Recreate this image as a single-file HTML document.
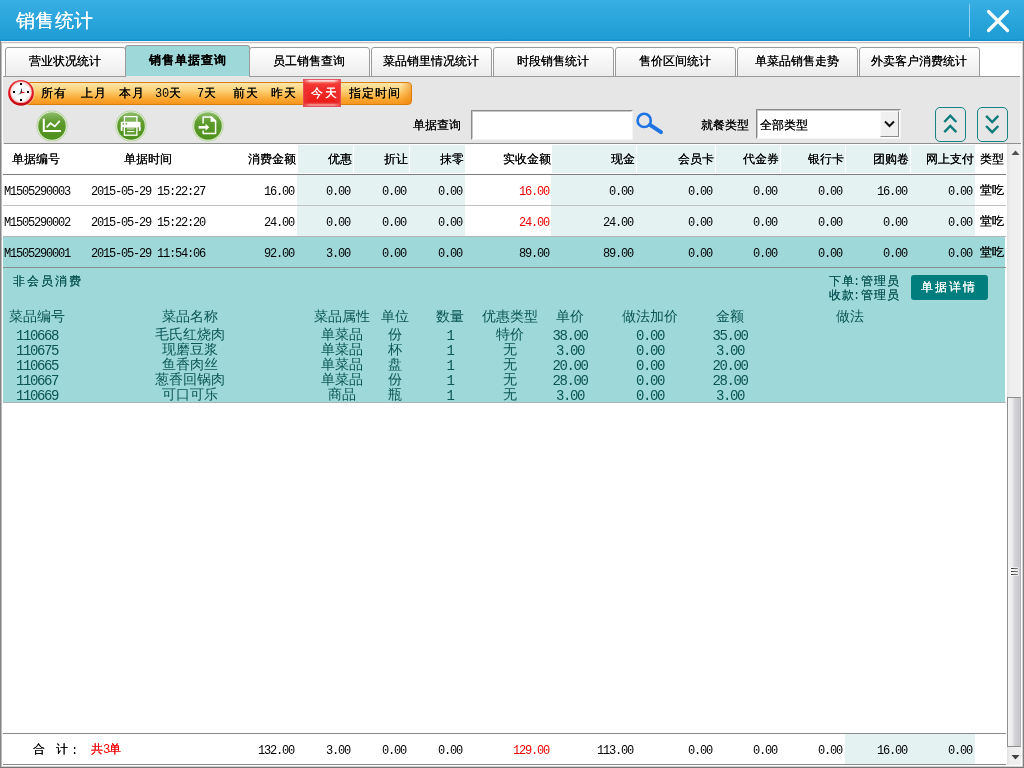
<!DOCTYPE html>
<html><head><meta charset="utf-8"><title>销售统计</title>
<style>
*{box-sizing:border-box;margin:0;padding:0}
html,body{width:1024px;height:768px;overflow:hidden;background:#fff}
body{position:relative;font-family:"Liberation Sans",sans-serif;font-size:12px;color:#000}
.a{position:absolute}
.t{position:absolute;white-space:nowrap;font-size:12px;line-height:14px;height:14px;text-shadow:0 0 0 currentColor}
.m{font-family:"Liberation Mono",monospace;letter-spacing:-1.2px;text-shadow:none}
.red{color:#f00000}
#title{left:0;top:0;width:1024px;height:41px;background:linear-gradient(#38afe4 0,#2ca6dd 18px,#1f9dd5 39px,#1391cd 40px,#1391cd 41px)}
#title .tt{left:16px;top:9px;font-size:19px;letter-spacing:.3px;line-height:24px;height:24px;color:#fff}
.tab{position:absolute;top:47px;height:30px;width:121px;border:1px solid #9a9a9a;border-radius:3px 3px 0 0;background:linear-gradient(#ffffff,#ececec);text-align:center;font-size:12px;line-height:14px;padding-top:6px;padding-right:2px;white-space:nowrap;text-shadow:0 0 0 currentColor}
.tab.sel{top:45px;height:31px;width:125px;background:#9fd8d8;border-bottom:none;font-weight:bold;letter-spacing:1px;padding-top:7px;padding-right:0;z-index:2}
.ls{letter-spacing:1px}
.ls .m{letter-spacing:-.2px}
.hc{position:absolute;top:145px;height:28px;background:#e4f2f2}
.bg{position:absolute;background:#e4f2f2}
.ln{position:absolute;height:1px}
.dt{text-shadow:none;color:#0a5656;font-size:14px;line-height:16px;height:16px}
.dt .m,.dt.m{letter-spacing:-1.4px}
.sp{letter-spacing:2px}
#w{position:absolute;left:0;top:0;width:1024px;height:768px;will-change:transform}
</style></head><body><div id="w">

<div class="a" id="title"><div class="t tt">销售统计</div>
<div class="a" style="left:969px;top:4px;width:1px;height:33px;background:#8fd1f1"></div>
<svg class="a" style="left:984px;top:7px" width="28" height="28" viewBox="0 0 28 28"><path d="M4.5 4.5 L23.5 23.5 M23.5 4.5 L4.5 23.5" stroke="#fff" stroke-width="3.2" stroke-linecap="round" fill="none"/></svg>
</div>
<div class="a" style="left:0;top:41px;width:1px;height:727px;background:#848484"></div>
<div class="a" style="left:1px;top:41px;width:1px;height:726px;background:#bcbcbc"></div>
<div class="a" style="left:1023px;top:41px;width:1px;height:727px;background:#808080"></div>
<div class="a" style="left:1022px;top:41px;width:1px;height:726px;background:#d4d4d4"></div>
<div class="a" style="left:0;top:767px;width:1024px;height:1px;background:#767676"></div>
<div class="a" style="left:1px;top:766px;width:1022px;height:1px;background:#d0d0d0"></div>
<div class="a" style="left:1px;top:41px;width:1022px;height:1px;background:#f4f4f4"></div>
<div class="a" style="left:2px;top:42px;width:1020px;height:1px;background:#c6bebe"></div>
<div class="a" style="left:2px;top:43px;width:1020px;height:1px;background:#f2f0f0"></div>
<div class="a" style="left:3px;top:76px;width:1017px;height:68px;background:#e6e6e6;border-top:1px solid #9a9a9a"></div>
<div class="a" style="left:1020px;top:77px;width:2px;height:66px;background:#f6f6f6"></div>

<div class="tab" style="left:5px">营业状况统计</div>
<div class="tab sel" style="left:125px">销售单据查询</div>
<div class="tab" style="left:249px">员工销售查询</div>
<div class="tab" style="left:371px">菜品销里情况统计</div>
<div class="tab" style="left:493px">时段销售统计</div>
<div class="tab" style="left:615px">售价区间统计</div>
<div class="tab" style="left:737px">单菜品销售走势</div>
<div class="tab" style="left:859px">外卖客户消费统计</div>
<div class="a" style="left:126px;top:76px;width:123px;height:1px;background:#e6e6e6;z-index:3"></div>
<div class="a" style="left:18px;top:82px;width:394px;height:23px;border:1px solid #dc7d08;border-radius:4px;background:linear-gradient(#fde7ab 0%,#fcd278 35%,#f9a832 75%,#f7941c 100%)"></div>
<div class="a" style="left:401px;top:83px;width:10px;height:21px;border-radius:0 3px 3px 0;background:linear-gradient(90deg,rgba(240,130,10,0),rgba(236,128,10,.55))"></div>
<div class="a" style="left:303px;top:79px;width:38px;height:28px;background:linear-gradient(#e05860 0,#f8b8b8 1px,#fff0f0 2px,#f88078 3px,#f43a34 5px,#f22c2a 10px,#ee2420 17px,#ea1c1a 23px,#ee4844 24.5px,#f6a4a4 26px,#ec6468 27px,#d84c56 28px)"></div>
<div class="a" style="left:303px;top:79px;width:38px;height:28px;background:linear-gradient(90deg,rgba(236,50,52,.95) 0,rgba(238,40,40,0) 7px,rgba(238,40,40,0) 31px,rgba(236,50,52,.95) 38px)"></div>
<div class="a" style="left:303px;top:79px;width:38px;height:28px;border:1px solid rgba(226,84,98,.85)"></div>
<svg class="a" style="left:6px;top:78px" width="30" height="30" viewBox="0 0 30 30">
<defs><radialGradient id="cg" cx="50%" cy="50%" r="50%"><stop offset="0" stop-color="#ffffff"/><stop offset=".74" stop-color="#ffffff"/><stop offset=".9" stop-color="#fbdcdc"/><stop offset="1" stop-color="#f09c9c"/></radialGradient>
<linearGradient id="cr" x1="0" y1="0" x2="0" y2="1"><stop offset="0" stop-color="#e62a30"/><stop offset=".6" stop-color="#e0141c"/><stop offset="1" stop-color="#c00c12"/></linearGradient></defs>
<circle cx="15" cy="14.9" r="13.4" fill="#f4fafa" opacity=".8"/>
<circle cx="15" cy="14.9" r="12.9" fill="url(#cr)"/>
<circle cx="15" cy="14.2" r="10.9" fill="url(#cg)"/>
<rect x="14" y="5" width="2" height="2" fill="#000"/><rect x="14" y="21" width="2" height="2" fill="#000"/><rect x="7" y="13" width="2" height="2" fill="#000"/><rect x="21" y="13" width="2" height="2" fill="#000"/>
<path d="M14.3 14.9 L15.6 9.6 L16 14.9 Z" fill="#111"/><path d="M15.8 14 L11.2 17 L15 15.6 Z" fill="#333"/><path d="M15.3 13.6 L19.4 14.6 L15.3 15.6 Z" fill="#e81010"/>
</svg>
<div class="t ls" style="left:41px;top:86px;">所有</div>
<div class="t ls" style="left:81px;top:86px;">上月</div>
<div class="t ls" style="left:119px;top:86px;">本月</div>
<div class="t ls" style="left:155px;top:86px;"><span class="m">30</span>天</div>
<div class="t ls" style="left:197px;top:86px;"><span class="m">7</span>天</div>
<div class="t ls" style="left:233px;top:86px;">前天</div>
<div class="t ls" style="left:271px;top:86px;">昨天</div>
<div class="t " style="left:311px;top:86px;color:#fff;letter-spacing:2px">今天</div>
<div class="t ls" style="left:349px;top:86px;">指定时间</div>
<svg width="0" height="0" style="position:absolute"><defs><linearGradient id="gg" x1="0" y1="0" x2="0" y2="1"><stop offset="0" stop-color="#8fbd6c"/><stop offset=".35" stop-color="#5f9c2e"/><stop offset="1" stop-color="#4d8f1c"/></linearGradient></defs></svg>
<svg class="a" style="left:35.3px;top:108.7px" width="34" height="34" viewBox="0 0 34 34">
<circle cx="17" cy="17" r="15.6" fill="#a9cf8e" opacity=".75"/><circle cx="17" cy="17" r="14.6" fill="#e8f4dc"/>
<circle cx="17" cy="17" r="13.8" fill="url(#gg)"/><path d="M8.8 9.6 V21.9 H26" stroke="#fff" stroke-width="2" fill="none"/><path d="M11.6 18.4 L15.6 14.2 L19.8 17.4 L24.8 11.9" stroke="#fff" stroke-width="1.7" fill="none"/></svg>
<svg class="a" style="left:114.3px;top:108.7px" width="34" height="34" viewBox="0 0 34 34">
<circle cx="17" cy="17" r="15.6" fill="#a9cf8e" opacity=".75"/><circle cx="17" cy="17" r="14.6" fill="#e8f4dc"/>
<circle cx="17" cy="17" r="13.8" fill="url(#gg)"/><rect x="10.4" y="7.6" width="12.5" height="6" fill="#7db257" stroke="#fff" stroke-width="1.3"/><rect x="6.8" y="12.8" width="19.7" height="9" rx=".8" fill="#fff"/><rect x="8.5" y="14.2" width="1.5" height="1.4" fill="#5a962a"/><rect x="11.6" y="14.2" width="1.5" height="1.4" fill="#5a962a"/><rect x="8.3" y="18.2" width="16.6" height="3.6" fill="#5a9a2a"/><rect x="6.8" y="18.2" width="1.5" height="3.6" fill="#fff"/><rect x="25" y="18.2" width="1.5" height="3.6" fill="#fff"/><rect x="10.4" y="18" width="12.5" height="8.2" fill="#5e9c2e" stroke="#fff" stroke-width="1.3"/><path d="M13 19.9 H20.4" stroke="#cfe3bf" stroke-width="1.1"/><path d="M13 22.6 H20.4" stroke="#fff" stroke-width="1.1"/></svg>
<svg class="a" style="left:191.3px;top:108.7px" width="34" height="34" viewBox="0 0 34 34">
<circle cx="17" cy="17" r="15.6" fill="#a9cf8e" opacity=".75"/><circle cx="17" cy="17" r="14.6" fill="#e8f4dc"/>
<circle cx="17" cy="17" r="13.8" fill="url(#gg)"/><path d="M12.1 14.6 V8.1 H20 L24.6 12.4 V24.6 H12.1 V21.6" stroke="#fff" stroke-width="1.5" fill="none" stroke-linejoin="round"/><path d="M19.6 7.6 H21 L25.2 11.6 V12.8 H19.6 Z" fill="#fff"/><path d="M7.6 18.3 H15" stroke="#fff" stroke-width="2.6"/><path d="M14.6 14.8 L18.2 18.3 L14.6 21.8 Z" fill="#fff"/></svg>
<div class="t " style="left:413px;top:118px;">单据查询</div>
<div class="a" style="left:471px;top:110px;width:162px;height:30px;background:#fff;border:1px solid;border-color:#8a8a8a #f4f4f4 #f4f4f4 #8a8a8a"></div>
<div class="a" style="left:472px;top:111px;width:160px;height:28px;border:1px solid;border-color:#c8c8c8 #fff #fff #c8c8c8"></div>
<svg class="a" style="left:634px;top:110px" width="32" height="28" viewBox="0 0 32 28"><circle cx="10.2" cy="10.4" r="6.6" fill="none" stroke="#1e74e2" stroke-width="2.6"/><path d="M16 14.8 L27 22.2" stroke="#1e74e2" stroke-width="4" stroke-linecap="round"/></svg>
<div class="t " style="left:701px;top:118px;">就餐类型</div>
<div class="a" style="left:756px;top:109px;width:145px;height:30px;background:#fff;border:1px solid;border-color:#8a8a8a #f4f4f4 #f4f4f4 #8a8a8a"></div>
<div class="a" style="left:757px;top:110px;width:143px;height:28px;border:1px solid;border-color:#c8c8c8 #fff #fff #c8c8c8"></div>
<div class="t " style="left:760px;top:118px;">全部类型</div>
<div class="a" style="left:880px;top:111px;width:19px;height:26px;background:#f0f0f0;border:1px solid;border-color:#fafafa #8c8c8c #8c8c8c #fafafa"></div>
<svg class="a" style="left:883px;top:119px" width="13" height="10" viewBox="0 0 13 10"><path d="M2 2.5 L6.5 7 L11 2.5" stroke="#111" stroke-width="2" fill="none"/></svg>
<div class="a" style="left:935px;top:107px;width:31px;height:35px;border:1px solid #148282;border-radius:5px"></div>
<div class="a" style="left:977px;top:107px;width:31px;height:35px;border:1px solid #148282;border-radius:5px"></div>
<svg class="a" style="left:935px;top:107px" width="31" height="35" viewBox="0 0 31 35"><path d="M9.3 15 L15.3 8.7 L21.3 15 M9.3 25.2 L15.3 18.9 L21.3 25.2" stroke="#0e7c7c" stroke-width="2.4" fill="none"/></svg>
<svg class="a" style="left:977px;top:107px" width="31" height="35" viewBox="0 0 31 35"><path d="M9.1 8.8 L15.2 15 L21.3 8.8 M9.1 19 L15.2 25.2 L21.3 19" stroke="#0e7c7c" stroke-width="2.4" fill="none"/></svg>
<div class="ln" style="left:4px;top:143px;width:1017px;background:#8e8e8e"></div>
<div class="hc" style="left:298px;width:55px"></div>
<div class="hc" style="left:354px;width:55px"></div>
<div class="hc" style="left:410px;width:55px"></div>
<div class="hc" style="left:552px;width:84px"></div>
<div class="hc" style="left:637px;width:78px"></div>
<div class="hc" style="left:716px;width:64px"></div>
<div class="hc" style="left:781px;width:64px"></div>
<div class="hc" style="left:846px;width:64px"></div>
<div class="hc" style="left:911px;width:64px"></div>
<div class="ln" style="left:3px;top:174px;width:1003px;background:#7c7c7c"></div>
<div class="bg" style="left:297px;top:175px;width:168px;height:61px"></div>
<div class="bg" style="left:551px;top:175px;width:424px;height:61px"></div>
<div class="ln" style="left:3px;top:205px;width:1003px;background:#c2c2c2"></div>
<div class="ln" style="left:3px;top:236px;width:1003px;background:#b4b4b4"></div>
<div class="a" style="left:3px;top:237px;width:1002px;height:165px;background:#9fd8d8"></div>
<div class="ln" style="left:3px;top:267px;width:1003px;background:#868e8e"></div>
<div class="ln" style="left:3px;top:402px;width:1003px;background:#aeb4b4"></div>
<div class="t " style="left:12px;top:152px;">单据编号</div>
<div class="t " style="left:124px;top:152px;">单据时间</div>
<div class="t " style="right:728px;top:152px;">消费金额</div>
<div class="t " style="right:672px;top:152px;">优惠</div>
<div class="t " style="right:616px;top:152px;">折让</div>
<div class="t " style="right:560px;top:152px;">抹零</div>
<div class="t " style="right:473px;top:152px;">实收金额</div>
<div class="t " style="right:389px;top:152px;">现金</div>
<div class="t " style="right:310px;top:152px;">会员卡</div>
<div class="t " style="right:245px;top:152px;">代金券</div>
<div class="t " style="right:180px;top:152px;">银行卡</div>
<div class="t " style="right:115px;top:152px;">团购卷</div>
<div class="t " style="right:50px;top:152px;">网上支付</div>
<div class="t " style="left:980px;top:152px;">类型</div>
<div class="t m" style="left:4px;top:185px;">M1505290003</div>
<div class="t m" style="left:91px;top:185px;">2015-05-29&nbsp;15:22:27</div>
<div class="t m" style="right:730px;top:185px;">16.00</div>
<div class="t m" style="right:674px;top:185px;">0.00</div>
<div class="t m" style="right:618px;top:185px;">0.00</div>
<div class="t m" style="right:562px;top:185px;">0.00</div>
<div class="t m red" style="right:475px;top:185px;">16.00</div>
<div class="t m" style="right:391px;top:185px;">0.00</div>
<div class="t m" style="right:312px;top:185px;">0.00</div>
<div class="t m" style="right:247px;top:185px;">0.00</div>
<div class="t m" style="right:182px;top:185px;">0.00</div>
<div class="t m" style="right:117px;top:185px;">16.00</div>
<div class="t m" style="right:52px;top:185px;">0.00</div>
<div class="t " style="left:980px;top:183px;">堂吃</div>
<div class="t m" style="left:4px;top:216px;">M1505290002</div>
<div class="t m" style="left:91px;top:216px;">2015-05-29&nbsp;15:22:20</div>
<div class="t m" style="right:730px;top:216px;">24.00</div>
<div class="t m" style="right:674px;top:216px;">0.00</div>
<div class="t m" style="right:618px;top:216px;">0.00</div>
<div class="t m" style="right:562px;top:216px;">0.00</div>
<div class="t m red" style="right:475px;top:216px;">24.00</div>
<div class="t m" style="right:391px;top:216px;">24.00</div>
<div class="t m" style="right:312px;top:216px;">0.00</div>
<div class="t m" style="right:247px;top:216px;">0.00</div>
<div class="t m" style="right:182px;top:216px;">0.00</div>
<div class="t m" style="right:117px;top:216px;">0.00</div>
<div class="t m" style="right:52px;top:216px;">0.00</div>
<div class="t " style="left:980px;top:214px;">堂吃</div>
<div class="t m" style="left:4px;top:247px;">M1505290001</div>
<div class="t m" style="left:91px;top:247px;">2015-05-29&nbsp;11:54:06</div>
<div class="t m" style="right:730px;top:247px;">92.00</div>
<div class="t m" style="right:674px;top:247px;">3.00</div>
<div class="t m" style="right:618px;top:247px;">0.00</div>
<div class="t m" style="right:562px;top:247px;">0.00</div>
<div class="t m" style="right:475px;top:247px;">89.00</div>
<div class="t m" style="right:391px;top:247px;">89.00</div>
<div class="t m" style="right:312px;top:247px;">0.00</div>
<div class="t m" style="right:247px;top:247px;">0.00</div>
<div class="t m" style="right:182px;top:247px;">0.00</div>
<div class="t m" style="right:117px;top:247px;">0.00</div>
<div class="t m" style="right:52px;top:247px;">0.00</div>
<div class="t " style="left:980px;top:245px;">堂吃</div>
<div class="t sp" style="left:13px;top:274px;color:#0a5656">非会员消费</div>
<div class="t " style="left:829px;top:274px;color:#0a5656;letter-spacing:1px">下单<span class="m" style="margin:0 2px 0 -2px">:</span>管理员</div>
<div class="t " style="left:829px;top:288px;color:#0a5656;letter-spacing:1px">收款<span class="m" style="margin:0 2px 0 -2px">:</span>管理员</div>
<div class="a" style="left:911px;top:275px;width:77px;height:25px;background:#007e7e;border-radius:3px"></div>
<div class="t sp" style="left:921px;top:280px;color:#fff">单据详情</div>
<div class="t dt" style="left:-113px;width:300px;text-align:center;top:308px;">菜品编号</div>
<div class="t dt" style="left:40px;width:300px;text-align:center;top:308px;">菜品名称</div>
<div class="t dt" style="left:192px;width:300px;text-align:center;top:308px;">菜品属性</div>
<div class="t dt" style="left:245px;width:300px;text-align:center;top:308px;">单位</div>
<div class="t dt" style="left:300px;width:300px;text-align:center;top:308px;">数量</div>
<div class="t dt" style="left:360px;width:300px;text-align:center;top:308px;">优惠类型</div>
<div class="t dt" style="left:420px;width:300px;text-align:center;top:308px;">单价</div>
<div class="t dt" style="left:500px;width:300px;text-align:center;top:308px;">做法加价</div>
<div class="t dt" style="left:580px;width:300px;text-align:center;top:308px;">金额</div>
<div class="t dt" style="left:700px;width:300px;text-align:center;top:308px;">做法</div>
<div class="t dt m" style="left:-113px;width:300px;text-align:center;top:328px;">110668</div>
<div class="t dt" style="left:40px;width:300px;text-align:center;top:326px;">毛氏红烧肉</div>
<div class="t dt" style="left:192px;width:300px;text-align:center;top:326px;">单菜品</div>
<div class="t dt" style="left:245px;width:300px;text-align:center;top:326px;">份</div>
<div class="t dt m" style="left:300px;width:300px;text-align:center;top:328px;">1</div>
<div class="t dt" style="left:360px;width:300px;text-align:center;top:326px;">特价</div>
<div class="t dt m" style="left:420px;width:300px;text-align:center;top:328px;">38.00</div>
<div class="t dt m" style="left:500px;width:300px;text-align:center;top:328px;">0.00</div>
<div class="t dt m" style="left:580px;width:300px;text-align:center;top:328px;">35.00</div>
<div class="t dt m" style="left:-113px;width:300px;text-align:center;top:343px;">110675</div>
<div class="t dt" style="left:40px;width:300px;text-align:center;top:341px;">现磨豆浆</div>
<div class="t dt" style="left:192px;width:300px;text-align:center;top:341px;">单菜品</div>
<div class="t dt" style="left:245px;width:300px;text-align:center;top:341px;">杯</div>
<div class="t dt m" style="left:300px;width:300px;text-align:center;top:343px;">1</div>
<div class="t dt" style="left:360px;width:300px;text-align:center;top:341px;">无</div>
<div class="t dt m" style="left:420px;width:300px;text-align:center;top:343px;">3.00</div>
<div class="t dt m" style="left:500px;width:300px;text-align:center;top:343px;">0.00</div>
<div class="t dt m" style="left:580px;width:300px;text-align:center;top:343px;">3.00</div>
<div class="t dt m" style="left:-113px;width:300px;text-align:center;top:358px;">110665</div>
<div class="t dt" style="left:40px;width:300px;text-align:center;top:356px;">鱼香肉丝</div>
<div class="t dt" style="left:192px;width:300px;text-align:center;top:356px;">单菜品</div>
<div class="t dt" style="left:245px;width:300px;text-align:center;top:356px;">盘</div>
<div class="t dt m" style="left:300px;width:300px;text-align:center;top:358px;">1</div>
<div class="t dt" style="left:360px;width:300px;text-align:center;top:356px;">无</div>
<div class="t dt m" style="left:420px;width:300px;text-align:center;top:358px;">20.00</div>
<div class="t dt m" style="left:500px;width:300px;text-align:center;top:358px;">0.00</div>
<div class="t dt m" style="left:580px;width:300px;text-align:center;top:358px;">20.00</div>
<div class="t dt m" style="left:-113px;width:300px;text-align:center;top:373px;">110667</div>
<div class="t dt" style="left:40px;width:300px;text-align:center;top:371px;">葱香回锅肉</div>
<div class="t dt" style="left:192px;width:300px;text-align:center;top:371px;">单菜品</div>
<div class="t dt" style="left:245px;width:300px;text-align:center;top:371px;">份</div>
<div class="t dt m" style="left:300px;width:300px;text-align:center;top:373px;">1</div>
<div class="t dt" style="left:360px;width:300px;text-align:center;top:371px;">无</div>
<div class="t dt m" style="left:420px;width:300px;text-align:center;top:373px;">28.00</div>
<div class="t dt m" style="left:500px;width:300px;text-align:center;top:373px;">0.00</div>
<div class="t dt m" style="left:580px;width:300px;text-align:center;top:373px;">28.00</div>
<div class="t dt m" style="left:-113px;width:300px;text-align:center;top:388px;">110669</div>
<div class="t dt" style="left:40px;width:300px;text-align:center;top:386px;">可口可乐</div>
<div class="t dt" style="left:192px;width:300px;text-align:center;top:386px;">商品</div>
<div class="t dt" style="left:245px;width:300px;text-align:center;top:386px;">瓶</div>
<div class="t dt m" style="left:300px;width:300px;text-align:center;top:388px;">1</div>
<div class="t dt" style="left:360px;width:300px;text-align:center;top:386px;">无</div>
<div class="t dt m" style="left:420px;width:300px;text-align:center;top:388px;">3.00</div>
<div class="t dt m" style="left:500px;width:300px;text-align:center;top:388px;">0.00</div>
<div class="t dt m" style="left:580px;width:300px;text-align:center;top:388px;">3.00</div>
<div class="a" style="left:2px;top:403px;width:1005px;height:10px;background:#fff"></div>
<div class="ln" style="left:3px;top:733px;width:1003px;background:#8a8a8a"></div>
<div class="ln" style="left:3px;top:764px;width:1003px;background:#8a8a8a"></div>
<div class="bg" style="left:845px;top:734px;width:130px;height:30px"></div>
<div class="t " style="left:33px;top:742px;">合</div>
<div class="t " style="left:56px;top:742px;">计</div>
<div class="t m" style="left:71px;top:744px;">:</div>
<div class="t red" style="left:91px;top:742px;">共<span class="m">3</span>单</div>
<div class="t m" style="right:730px;top:744px;">132.00</div>
<div class="t m" style="right:674px;top:744px;">3.00</div>
<div class="t m" style="right:618px;top:744px;">0.00</div>
<div class="t m" style="right:562px;top:744px;">0.00</div>
<div class="t m red" style="right:475px;top:744px;">129.00</div>
<div class="t m" style="right:391px;top:744px;">113.00</div>
<div class="t m" style="right:312px;top:744px;">0.00</div>
<div class="t m" style="right:247px;top:744px;">0.00</div>
<div class="t m" style="right:182px;top:744px;">0.00</div>
<div class="t m" style="right:117px;top:744px;">16.00</div>
<div class="t m" style="right:52px;top:744px;">0.00</div>
<div class="a" style="left:1007px;top:144px;width:14px;height:621px;background:linear-gradient(90deg,#e2e2e2,#eeeeee 3px,#f0f0f0)"></div>
<div class="a" style="left:1007px;top:397px;width:14px;height:350px;border:1px solid #8e8e8e;border-right-color:#b4b4b8;background:linear-gradient(90deg,#f6f6f6 0,#e9e9ea 5px,#d6d6da 6px,#c6c6cc 11px,#d2d2d6 13px)"></div>
<svg class="a" style="left:1011px;top:149px" width="9" height="7" viewBox="0 0 9 7"><path d="M0.5 6 L4.5 1.5 L8.5 6 Z" fill="#505050"/></svg>
<svg class="a" style="left:1011px;top:754px" width="9" height="7" viewBox="0 0 9 7"><path d="M0.5 1 L4.5 5.5 L8.5 1 Z" fill="#404040"/></svg>
<div class="a" style="left:1010px;top:567px;width:9px;height:3px;background:rgba(255,255,255,.55);border-radius:1px"></div>
<div class="a" style="left:1011px;top:568px;width:7px;height:1px;background:linear-gradient(90deg,#2c2c2c,#585858 40%,#8c8c8c)"></div>
<div class="a" style="left:1010px;top:570px;width:9px;height:3px;background:rgba(255,255,255,.55);border-radius:1px"></div>
<div class="a" style="left:1011px;top:571px;width:7px;height:1px;background:linear-gradient(90deg,#2c2c2c,#585858 40%,#8c8c8c)"></div>
<div class="a" style="left:1010px;top:573px;width:9px;height:3px;background:rgba(255,255,255,.55);border-radius:1px"></div>
<div class="a" style="left:1011px;top:574px;width:7px;height:1px;background:linear-gradient(90deg,#2c2c2c,#585858 40%,#8c8c8c)"></div>
</div></body></html>
